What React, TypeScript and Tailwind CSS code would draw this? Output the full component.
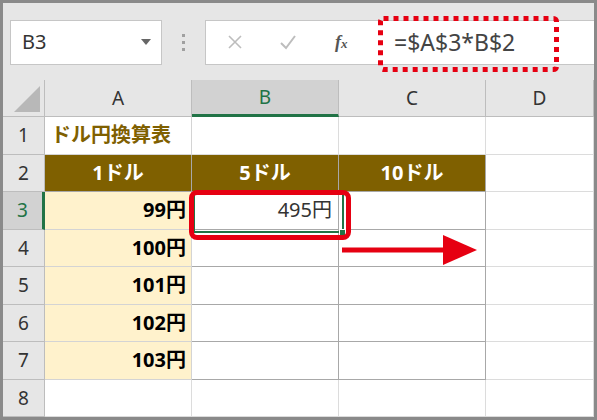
import React from "react";

const cols = [
  { key: "A", w: "w-[147px]" },
  { key: "B", w: "w-[147px]" },
  { key: "C", w: "w-[147px]" },
  { key: "D", w: "w-[108px]" },
];

type Cell = { text?: string; kind?: "title" | "head" | "yen" | "val" | "none" };

const rows: Cell[][] = [
  [{ text: "ドル円換算表", kind: "title" }, {}, {}, {}],
  [{ text: "1ドル", kind: "head" }, { text: "5ドル", kind: "head" }, { text: "10ドル", kind: "head" }, {}],
  [{ text: "99円", kind: "yen" }, { text: "495円", kind: "val" }, { kind: "none" }, {}],
  [{ text: "100円", kind: "yen" }, { kind: "none" }, { kind: "none" }, {}],
  [{ text: "101円", kind: "yen" }, { kind: "none" }, { kind: "none" }, {}],
  [{ text: "102円", kind: "yen" }, { kind: "none" }, { kind: "none" }, {}],
  [{ text: "103円", kind: "yen" }, { kind: "none" }, { kind: "none" }, {}],
  [{}, {}, {}, {}],
];

function cellClass(c: Cell) {
  switch (c.kind) {
    case "title":
      return "bg-white text-[#7f6000] font-bold justify-start pl-[6px] border-[#d4d4d4]";
    case "head":
      return "bg-[#7f6000] text-white font-bold justify-center border-[#a8a8a8]";
    case "yen":
      return "bg-[#fff2cc] text-black font-bold justify-end pr-[5px] border-[#d4d4d4]";
    case "val":
      return "bg-white text-[#333] justify-end pr-[6px] border-[#a8a8a8]";
    case "none":
      return "bg-white border-[#a8a8a8]";
    default:
      return "bg-white border-[#dcdcdc]";
  }
}

export default function App() {
  return (
    <div
      className="relative w-[597px] h-[420px] overflow-hidden border-[3px] border-[#8a8a8a] bg-[#e6e6e6]"
      style={{ fontFamily: '"Noto Sans", "Noto Sans CJK JP", sans-serif' }}
    >
      {/* formula bar */}
      <div className="flex items-center h-[77px] pl-[7px] pt-[1px]">
        <div className="flex items-center justify-between w-[152px] h-[45px] bg-white border border-[#c6c6c6] pl-[11px] pr-[10px]">
          <span className="text-[20px] text-[#333]">B3</span>
          <span className="w-0 h-0 border-l-[5px] border-r-[5px] border-t-[6px] border-l-transparent border-r-transparent border-t-[#666]" />
        </div>
        <div className="flex flex-col gap-[4px] mx-[20px]">
          <span className="w-[3px] h-[3px] bg-[#a0a0a0]" />
          <span className="w-[3px] h-[3px] bg-[#a0a0a0]" />
          <span className="w-[3px] h-[3px] bg-[#a0a0a0]" />
        </div>
        <div className="flex items-center flex-1 h-[45px] bg-white border border-[#c6c6c6] border-r-0">
          <div className="flex items-center w-[164px] h-full">
            <svg className="ml-[21px]" width="16" height="16" viewBox="0 0 16 16">
              <path d="M2 2 L14 14 M14 2 L2 14" stroke="#bdbdbd" strokeWidth="1.6" fill="none" />
            </svg>
            <svg className="ml-[36px]" width="18" height="16" viewBox="0 0 18 16">
              <path d="M2 9 L7 14 L16 2" stroke="#bdbdbd" strokeWidth="2" fill="none" />
            </svg>
            <span className="ml-[38px] text-[18px] italic font-bold text-[#555]" style={{ fontFamily: '"Liberation Serif", serif' }}>
              f<span className="text-[13px]">x</span>
            </span>
          </div>
          <span className="ml-[24px] text-[23px] text-[#444]">=$A$3*B$2</span>
        </div>
      </div>

      {/* sheet */}
      <div className="flex flex-col bg-white">
        <div className="flex h-[37px] bg-[#e6e6e6]">
          <div className="relative w-[42px] border-r border-b border-[#bdbdbd]">
            <svg className="absolute right-[4px] bottom-[4px]" width="26" height="26" viewBox="0 0 26 26">
              <path d="M26 0 L26 26 L0 26 Z" fill="#b8b8b8" />
            </svg>
          </div>
          {cols.map((c) => (
            <div
              key={c.key}
              className={`${c.w} flex items-center justify-center text-[19px] border-r border-[#bdbdbd] ${
                c.key === "B"
                  ? "bg-[#d2d2d2] text-[#217346] border-b-[3px] border-b-[#217346]"
                  : "text-[#333] border-b border-b-[#bdbdbd]"
              }`}
            >
              {c.key}
            </div>
          ))}
        </div>
        {rows.map((r, i) => (
          <div key={i} className="flex h-[37.5px]">
            <div
              className={`w-[42px] flex items-center justify-center text-[19px] border-b border-[#bdbdbd] ${
                i === 2
                  ? "bg-[#d2d2d2] text-[#217346] border-r-[3px] border-r-[#217346]"
                  : "bg-[#e6e6e6] text-[#333] border-r border-r-[#bdbdbd]"
              }`}
            >
              {i + 1}
            </div>
            {r.map((c, j) => (
              <div
                key={j}
                className={`${cols[j].w} flex items-center text-[20px] border-r border-b ${cellClass(c)}`}
              >
                {c.text}
              </div>
            ))}
          </div>
        ))}
      </div>

      {/* active cell B3 */}
      <div className="absolute left-[190px] top-[190px] w-[151px] h-[40px] border-2 border-[#217346] pointer-events-none" />
      <div className="absolute left-[336px] top-[226px] w-[7px] h-[7px] bg-[#217346] border border-white" />

      {/* red highlight around B3 */}
      <div className="absolute left-[186px] top-[187px] w-[162px] h-[50px] border-[5px] border-[#e60012] rounded-[8px]" />

      {/* arrow */}
      <svg className="absolute left-[339px] top-[231px]" width="140" height="32" viewBox="0 0 140 32">
        <path d="M0 16 L105 16" stroke="#e60012" strokeWidth="5" />
        <path d="M101 1 L135 16 L101 31 Z" fill="#e60012" />
      </svg>

      {/* dotted highlight around formula */}
      <svg className="absolute left-[375px] top-[13px]" width="181" height="56" viewBox="0 0 181 56">
        <rect x="2.5" y="2.5" width="176" height="51" rx="3" fill="none" stroke="#e60012" strokeWidth="5" strokeDasharray="5 5" />
      </svg>
    </div>
  );
}
